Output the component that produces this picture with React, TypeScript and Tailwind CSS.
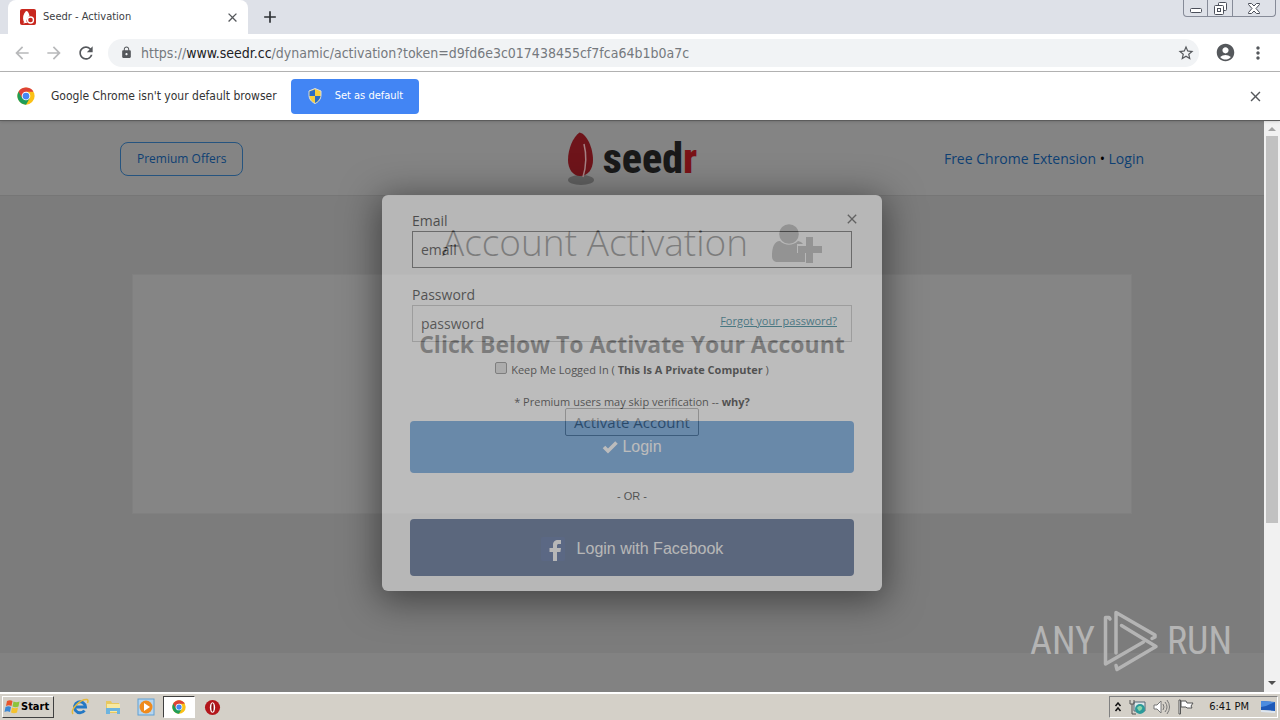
import type { ReactNode } from "react";
import { MdAccountCircle, MdArrowBack, MdArrowForward, MdClose, MdLock, MdMoreVert, MdRefresh, MdStarBorder, MdAdd } from "react-icons/md";

const uiFont = "font-['DejaVu_Sans_Condensed','DejaVu_Sans',sans-serif]";
const pageFont = "font-['Open_Sans',sans-serif]";

function ChromeLogo({ className }: { className: string }) {
  return (
    <svg viewBox="0 0 48 48" className={className} aria-hidden="true">
      <circle cx="24" cy="24" r="23" fill="#fbc116" />
      <path d="M4.1 12.5A23 23 0 0 0 24 47l10-17.200-10-5.800V12.500Z" fill="#1f9d58" />
      <path d="M24 12.500h19.900A23 23 0 0 0 4.100 12.500L14 29.800Z" fill="#dd4237" />
      <circle cx="24" cy="24" r="11.500" fill="#fff" />
      <circle cx="24" cy="24" r="9" fill="#4587f3" />
    </svg>
  );
}

function TabBar() {
  return (
    <div className="flex h-[34px] items-end bg-[#dee1e8] pl-2">
      <div className="flex h-full w-[240px] items-center rounded-t-lg bg-white pr-2 pl-3">
        <svg viewBox="0 0 16 16" className="size-4" aria-hidden="true">
          <rect width="16" height="16" rx="2" fill="#c8281f" />
          <path d="M6 2C3 5 2.500 9 3.500 12c1 2 2 2 3 2C6 11 8 8 9.500 7 9 4 8 2 6 2Z" fill="#fff" />
          <circle cx="10.500" cy="11" r="3" fill="none" stroke="#fff" strokeWidth="1.300" />
          <path d="m3.500 14 4-1" stroke="#fff" />
        </svg>
        <span className="ml-[7px] flex-1 text-[11px] text-[#3c4043]">Seedr - Activation</span>
        <button aria-label="Close tab" className="text-[#55585c]">
          <MdClose size={15} stroke="currentColor" />
        </button>
      </div>
      <button aria-label="New tab" className="ml-3 flex h-full items-center text-[#2d3034]">
        <MdAdd size={20} />
      </button>
      <div className="mr-1 ml-auto flex h-[17px] self-start rounded-b border border-t-0 border-[#868b98] text-[#4b4f5a]">
        <button aria-label="Minimize" className="flex w-6 items-center justify-center border-r border-[#868b98]">
          <svg viewBox="0 0 12 12" className="size-3" fill="#fff" stroke="currentColor" aria-hidden="true">
            <rect x=".5" y="6.500" width="11" height="4" rx="1" />
          </svg>
        </button>
        <button aria-label="Restore" className="flex w-[25px] items-center justify-center border-r border-[#868b98]">
          <svg viewBox="0 0 13 13" className="size-[13px]" fill="#fff" stroke="currentColor" aria-hidden="true">
            <rect x="4.500" y=".5" width="8" height="8" rx="1" />
            <rect x=".5" y="3.500" width="9" height="9" rx="1" />
            <rect x="3.500" y="6.500" width="3" height="3" />
          </svg>
        </button>
        <button aria-label="Close" className="flex w-[42px] items-center justify-center">
          <svg viewBox="0 0 12 11" className="h-[11px] w-3" fill="#fff" stroke="currentColor" aria-hidden="true">
            <path d="M.5.500h3L6 3 8.500.500h3v1L8 5.500l3.500 4v1h-3L6 8l-2.500 2.500h-3v-1L4 5.500.500 1.500Z" />
          </svg>
        </button>
      </div>
    </div>
  );
}

function Toolbar() {
  return (
    <div className="flex h-[38px] items-center border-b border-[#b4b4b4] bg-white px-3">
      <button aria-label="Back" className="text-[#b8b9bb]">
        <MdArrowBack size={20} />
      </button>
      <button aria-label="Forward" className="ml-3 text-[#b8b9bb]">
        <MdArrowForward size={20} />
      </button>
      <button aria-label="Reload" className="ml-3 text-[#55585c]">
        <MdRefresh size={20} stroke="currentColor" />
      </button>
      <div className="ml-3 flex h-7 flex-1 items-center rounded-full bg-[#f1f3f5] pr-1 pl-3">
        <MdLock size={13} className="text-[#55585c]" />
        <div role="textbox" aria-label="Address" className="ml-2 flex-1 text-sm text-[#75797e]">
          https://<span className="text-[#202124]">www.seedr.cc</span>/dynamic/activation?token=d9fd6e3c017438455cf7fca64b1b0a7c
        </div>
        <button aria-label="Bookmark this page" className="text-[#55585c]">
          <MdStarBorder size={18} />
        </button>
      </div>
      <button aria-label="Profile" className="ml-4 text-[#55585c]">
        <MdAccountCircle size={21} />
      </button>
      <button aria-label="Menu" className="ml-3 text-[#55585c]">
        <MdMoreVert size={20} />
      </button>
    </div>
  );
}

function InfoBar() {
  return (
    <div className="relative z-10 flex h-[49px] items-center border-b border-[#5c5c5c] bg-white pr-4 pl-[17px] shadow">
      <ChromeLogo className="size-[18px]" />
      <span className="ml-4 text-xs text-[#333]">Google Chrome isn't your default browser</span>
      <button className="ml-[14px] flex h-[35px] items-center gap-3 rounded-sm bg-[#4285f4] px-4 text-[11px] text-white">
        <svg viewBox="0 0 16 16" className="size-4" aria-hidden="true">
          <path d="M8 .5 14 3v4c0 4-2.500 7-6 8.500C4.500 14 2 11 2 7V3Z" fill="#f6cf3c" stroke="#d9dde2" />
          <path d="M8 1.500V8H2.500V3.500ZM8 8h5.500c-.5 3-2.500 5.500-5.500 7Z" fill="#2a6cc4" />
        </svg>
        Set as default
      </button>
      <button aria-label="Dismiss" className="ml-auto text-[#55585c]">
        <MdClose size={17} stroke="currentColor" />
      </button>
    </div>
  );
}

function SeedrLogo() {
  return (
    <a href="#" aria-label="seedr" className="flex items-center gap-2">
      <svg viewBox="0 0 28 54" className="h-[54px] w-7" aria-hidden="true">
        <ellipse cx="14" cy="48" rx="13" ry="5" fill="#606060" />
        <path d="M12.500.500C6 5 1 17 1 28c0 9 5 16 12 16 8 0 13-7 13-16C26 16 20 2 12.500.500Z" fill="#6e141a" />
        <path d="M17 12c3 12 2 23-1 33" fill="none" stroke="#a58083" strokeWidth="1.500" />
      </svg>
      <span className="font-['Roboto_Condensed','Roboto',sans-serif] text-[42px] leading-[50px] font-extrabold text-[#191919]">
        seed<span className="text-[#7a1217]">r</span>
      </span>
    </a>
  );
}

function AccountPage() {
  return (
    <div className="flex min-w-0 flex-1 flex-col bg-[#7c7c7c]">
      <header className="grid h-[75px] grid-cols-3 items-center border-b border-[#767676] bg-[#848484] px-[120px] pt-0.5 text-[#0e4073]">
        <a href="#" className="justify-self-start rounded-lg border border-[#26547f] px-4 py-1.5 text-xs leading-5">
          Premium Offers
        </a>
        <div className="justify-self-center">
          <SeedrLogo />
        </div>
        <nav className="justify-self-end text-sm whitespace-nowrap">
          <a href="#">Free Chrome Extension</a> <span className="text-black">•</span> <a href="#">Login</a>
        </nav>
      </header>
      <main className="mx-auto w-full max-w-[1000px] flex-1 pt-4">
        <h1 className="flex h-[62px] items-start justify-center gap-6 text-[37px] leading-[60px] font-light text-[#111]">
          Account Activation
          <svg viewBox="0 0 50 40" className="mt-3 h-10 w-[50px]" fill="#3a3a3a" aria-hidden="true">
            <circle cx="17" cy="10" r="9.800" />
            <path d="M8 17c5 5 13 5 18 0 2 .3 4 1.500 5 3h-6v9h8v9H6c-4 0-6-2-6-6 0-8 2-15 8-15Z" />
            <path d="M34 13h7v9h9v7h-9v10h-7V29h-8v-7h8Z" />
          </svg>
        </h1>
        <section className="flex h-[240px] flex-col items-center border border-[#808080] bg-[#858585] pt-[53px]">
          <h2 className="text-[23px] leading-8 font-bold text-[#111]">Click Below To Activate Your Account</h2>
          <button className="mt-12 h-7 rounded-xs border border-[#333] px-2 text-[15px] text-[#111]">Activate Account</button>
        </section>
      </main>
      <footer className="h-[39px] bg-[#828282]" />
    </div>
  );
}

function LoginDialog() {
  return (
    <form className="w-[500px] rounded-md bg-white px-7 pt-4 pb-[15px] text-[#111] opacity-45 shadow-[0_6px_36px_4px_#000]">
      <div className="px-0.5">
        <div className="flex h-5 items-center justify-between text-sm">
          <label htmlFor="email">Email</label>
          <button type="button" aria-label="Close dialog" className="-mr-2 self-start text-[#444]">
            <MdClose size={16} stroke="currentColor" />
          </button>
        </div>
        <input
          id="email"
          type="email"
          placeholder="email"
          className="block h-[37px] w-full border border-[#555] px-2 text-sm placeholder:text-[#222]"
        />
        <label htmlFor="password" className="mt-[17px] block h-5 text-sm leading-5">Password</label>
        <div className="relative">
          <input
            id="password"
            type="password"
            placeholder="password"
            className="block h-[37px] w-full border border-[#bbb] px-2 text-sm placeholder:text-[#222]"
          />
          <a href="#" className="absolute top-2 right-[15px] text-[11px] leading-4 text-[#00677f] underline">
            Forgot your password?
          </a>
        </div>
      </div>
      <label className="mt-[18px] flex h-5 items-center justify-center gap-1 text-[11px] whitespace-pre">
        <input type="checkbox" className="mb-1 size-3 appearance-none rounded-xs border border-[#777] bg-[#ddd]" />
        <span>Keep Me Logged In ( <b>This Is A Private Computer</b> )</span>
      </label>
      <p className="mt-3 text-center text-[11px] leading-5">
        * Premium users may skip verification -- <b>why?</b>
      </p>
      <button type="button" className="mt-[9px] flex h-[52px] w-full items-center justify-center gap-1 rounded bg-[#498ed5] font-['Liberation_Sans',sans-serif] text-base text-white">
        <svg viewBox="0 0 16 14" className="h-[14px] w-4" fill="none" stroke="currentColor" strokeWidth="3.600" aria-hidden="true">
          <path d="m2 7 4 4 8.500-8.500" />
        </svg>
        Login
      </button>
      <p className="my-[13px] text-center font-['Liberation_Sans',sans-serif] text-[11px] leading-5">- OR -</p>
      <button type="button" className="flex h-[57px] w-full items-center justify-center gap-3 rounded bg-[#344f80] pt-0.5 font-['Liberation_Sans',sans-serif] text-base text-white">
        <svg viewBox="0 0 24 24" className="size-6" aria-hidden="true">
          <rect width="24" height="24" rx="2" fill="#35508f" />
          <path d="M12 24v-9H8.500v-4H12V8c0-3.500 2-5 5-5h3v4h-2c-1.500 0-2 .5-2 2v2h4l-.6 4H16v9Z" fill="#fff" />
        </svg>
        Login with Facebook
      </button>
    </form>
  );
}

function ScrollBar() {
  return (
    <div className="flex w-4 flex-col items-center bg-[#f1f1f1]" aria-hidden="true">
      <svg viewBox="0 0 16 15" className="h-[15px] w-4">
        <path d="m4 10 4-4 4 4Z" fill="#a3a3a3" />
      </svg>
      <div className="w-3 grow-[387] basis-0 bg-[#c1c1c1]" />
      <div className="grow-[152] basis-0" />
      <svg viewBox="0 0 16 17" className="h-[17px] w-4">
        <path d="m4 6 4 4 4-4Z" fill="#505050" />
      </svg>
    </div>
  );
}

function Watermark() {
  return (
    <div className="flex items-center gap-2 font-['Roboto_Condensed','Roboto',sans-serif] text-[38px] text-[#b4b4b4]">
      <span>ANY</span>
      <svg viewBox="0 0 56 62" className="h-[62px] w-14" fill="none" stroke="currentColor" strokeWidth="3.500" strokeLinejoin="round" strokeLinecap="round" aria-hidden="true">
        <path d="M7 9 6 7.500H2.500V54l38-22" />
        <path d="M13 43V2.500l39 22.500v2l-3 1.500" />
        <path d="m18.500 15.500 34.500 21-39 23-1-4" />
      </svg>
      <span>RUN</span>
    </div>
  );
}

const launchers: { label: string; active?: boolean; icon: ReactNode }[] = [
  {
    label: "Internet Explorer",
    icon: (
      <svg viewBox="0 0 18 18" className="size-[18px]" fill="none">
        <path d="M13.500 12.500A5.500 5.500 0 1 1 14.500 9H5" stroke="#2478c4" strokeWidth="3" />
        <path d="M2 16C-1 12 9 1 16 1.500c1.500.5 1 2.500.5 3.500" stroke="#e5b93b" strokeWidth="1.500" />
      </svg>
    ),
  },
  {
    label: "Explorer",
    icon: (
      <svg viewBox="0 0 18 18" className="size-[18px]">
        <path d="M2 3h5l1 2h7v10H2Z" fill="#e8c860" />
        <path d="M3 6h13v8H3Z" fill="#f8e9a0" />
        <path d="M2 10h14v6h-3v-3H6v3H2Z" fill="#6db4df" />
      </svg>
    ),
  },
  {
    label: "Media Player",
    icon: (
      <svg viewBox="0 0 18 18" className="size-[18px]">
        <rect x="1" y="1" width="16" height="16" fill="#b7d5ee" stroke="#5f9fd4" />
        <circle cx="9" cy="9" r="6.500" fill="#ef8a1c" />
        <path d="m7 5 6 4-6 4Z" fill="#fff" />
      </svg>
    ),
  },
  { label: "Chrome", active: true, icon: <ChromeLogo className="size-[14px]" /> },
  {
    label: "Opera",
    icon: (
      <svg viewBox="0 0 18 18" className="size-[17px]">
        <circle cx="9" cy="9" r="8" fill="#b3161b" />
        <ellipse cx="9" cy="9" rx="2.800" ry="5.500" fill="#fff" />
        <ellipse cx="9" cy="9" rx="1.200" ry="4.500" fill="#8a0c10" />
      </svg>
    ),
  },
];

function Taskbar() {
  return (
    <div className="flex h-7 items-center border-t-2 border-white bg-[#d4d0c8] px-0.5">
      <button className="flex h-[22px] items-center border border-t-white border-r-[#404040] border-b-[#404040] border-l-white pr-1 pl-px font-['DejaVu_Sans_Condensed','DejaVu_Sans',sans-serif] text-[11px] font-bold text-black">
        <svg viewBox="0 0 17 16" className="h-4 w-[17px]" aria-hidden="true">
          <path d="M3 2c2-1 4-1 5.500 0L7.500 7C5.500 6 4 6 2 7Z" fill="#e8552c" />
          <path d="M9.500 2.500c2 1 4 1 6 0l-1 5c-2 1-4 1-6 0Z" fill="#8cc43c" />
          <path d="M1.500 8c2-1 4-1 5.500 0l-1 5C4 12 2.500 12 .500 13Z" fill="#3b87d4" />
          <path d="M8 8.500c2 1 4 1 6 0l-1 5c-2 1-4 1-6 0Z" fill="#f5c22e" />
        </svg>
        Start
      </button>
      <div className="ml-[10px] flex items-center gap-px">
        {launchers.map((item) => (
          <button
            key={item.label}
            aria-label={item.label}
            className={
              item.active
                ? "flex h-[22px] w-8 items-center justify-center border border-t-[#404040] border-r-white border-b-white border-l-[#404040] bg-white"
                : "flex h-[22px] w-8 items-center justify-center"
            }
          >
            {item.icon}
          </button>
        ))}
      </div>
      <div className="ml-auto flex h-[22px] items-center gap-[7px] border border-t-[#808080] border-r-white border-b-white border-l-[#808080] pr-px pl-1 text-[#111]">
        <svg viewBox="0 0 8 10" className="h-[10px] w-2" fill="none" stroke="currentColor" strokeWidth="1.500" aria-hidden="true">
          <path d="m1.500 4 2.500-3 2.500 3M1.500 9 4 6l2.500 3" />
        </svg>
        <svg viewBox="0 0 17 16" className="h-4 w-[17px]" aria-hidden="true">
          <path d="M5 3h11v9H5Z" fill="#dfe8ea" stroke="#567" />
          <circle cx="11" cy="10" r="5" fill="#2c9a9a" />
          <path d="M8 9c2-3 4-2 5-1s-1 4-3 4Z" fill="#8ad4a8" />
          <path d="M1 1v4h4V1M3 5v10h4" fill="none" stroke="#555" />
        </svg>
        <svg viewBox="0 0 17 16" className="h-4 w-[17px]" fill="#fff" stroke="#777" aria-hidden="true">
          <path d="M1 6h3l4-4v12l-4-4H1Z" />
          <path d="M10 5q2 3 0 6M12 3q4 5 0 10M14 1q5 7 0 14" fill="none" />
        </svg>
        <svg viewBox="0 0 17 16" className="h-4 w-[17px]" fill="#fff" stroke="#555" aria-hidden="true">
          <path d="M2 1v14h1.500V1ZM4 2h5l1 2h6l-2 3 1 2h-5L9 8H4Z" />
        </svg>
        <span className="ml-2 text-[11px]">6:41 PM</span>
        <svg viewBox="0 0 16 14" className="ml-1 h-[14px] w-4" aria-hidden="true">
          <path d="m1 1 14 1v9L1 10Z" fill="#1d59b8" />
          <path d="m1 1 14 1-9 4-5 1Z" fill="#4b8ce0" />
          <path d="m1 10 14 1v2L1 12Z" fill="#dde6f0" />
        </svg>
      </div>
    </div>
  );
}

export default function App() {
  return (
    <div className={`flex min-h-screen flex-col ${uiFont}`}>
      <TabBar />
      <Toolbar />
      <InfoBar />
      <div className={`relative flex flex-1 ${pageFont}`}>
        <AccountPage />
        <ScrollBar />
        <div className="absolute inset-y-0 right-4 left-0 flex items-start justify-center overflow-hidden pt-[74px]">
          <LoginDialog />
        </div>
        <div className="absolute right-12 bottom-5">
          <Watermark />
        </div>
      </div>
      <Taskbar />
    </div>
  );
}
